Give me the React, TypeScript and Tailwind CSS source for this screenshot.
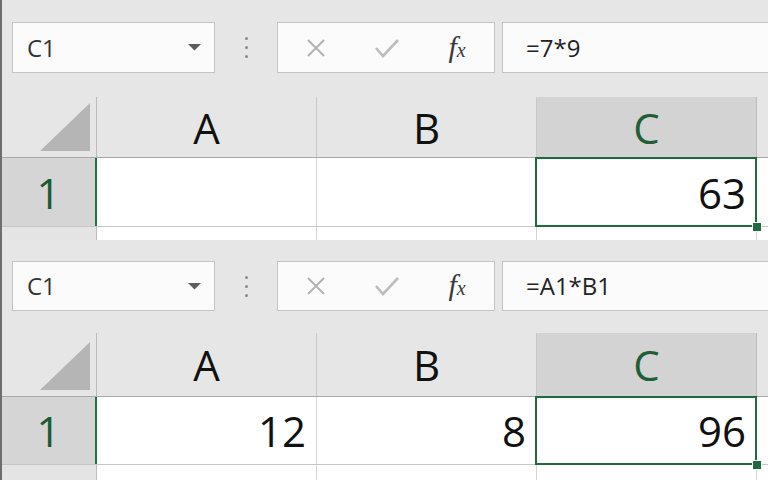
import React from "react";

const GREEN = "#217346";

interface PanelProps {
  formula: string;
  values: string[];
  top: string;
  boxH: string;
  gap: string;
  headerH: string;
  rowH: string;
}

function XIcon() {
  return (
    <svg width="22" height="18" viewBox="0 0 22 18" fill="none">
      <path d="M3 1 L19 17 M19 1 L3 17" stroke="#b3b3b3" strokeWidth="2" />
    </svg>
  );
}

function CheckIcon() {
  return (
    <svg width="26" height="20" viewBox="0 0 26 20" fill="none">
      <path d="M2 10 L9 18 L24 2" stroke="#bdbdbd" strokeWidth="2.6" />
    </svg>
  );
}

function FormulaBar({ formula, boxH }: { formula: string; boxH: string }) {
  return (
    <div className={`flex items-stretch ${boxH}`}>
      <div className="ml-[10px] flex w-[203px] items-center justify-between border border-[#c4c4c4] bg-[#fbfbfb] pl-[14px] pr-[13px]">
        <span className="text-[24px] text-[#333]">C1</span>
        <svg width="13" height="7" viewBox="0 0 13 7">
          <path d="M0 0 H13 L6.5 6.5 Z" fill="#5c5c5c" />
        </svg>
      </div>
      <div className="flex w-[62px] flex-col items-center justify-center gap-[6px]">
        <span className="h-[3px] w-[3px] rounded-full bg-[#8a8a8a]" />
        <span className="h-[3px] w-[3px] rounded-full bg-[#8a8a8a]" />
        <span className="h-[3px] w-[3px] rounded-full bg-[#8a8a8a]" />
      </div>
      <div className="flex w-[218px] items-center border border-[#c4c4c4] bg-[#fbfbfb]">
        <div className="flex w-[74px] justify-center pl-[2px]">
          <XIcon />
        </div>
        <div className="flex w-[70px] justify-center">
          <CheckIcon />
        </div>
        <div className="flex w-[70px] justify-center pb-[2px]">
          <span className="font-['Liberation_Serif',serif] text-[30px] italic leading-none text-[#3a3a3a]">
            f<span className="text-[20px]">x</span>
          </span>
        </div>
      </div>
      <div className="ml-[7px] flex flex-1 items-center border border-r-0 border-[#c4c4c4] bg-[#fbfbfb] pl-[23px]">
        <span className="text-[24px] text-[#222]">{formula}</span>
      </div>
    </div>
  );
}

function Panel({ formula, values, top, boxH, gap, headerH, rowH }: PanelProps) {
  const cols = ["A", "B", "C"];
  return (
    <div className="flex h-[240px] flex-col">
      <div className={top} />
      <FormulaBar formula={formula} boxH={boxH} />
      <div className={gap} />
      {/* column headers */}
      <div className={`flex ${headerH} border-b border-[#a8a8a8]`}>
        <div className="flex w-[95px] items-end justify-end border-r border-[#bdbdbd] pb-[6px] pr-[6px]">
          <svg width="50" height="48" viewBox="0 0 50 48">
            <path d="M0 48 L50 48 L50 0 Z" fill="#b5b5b5" />
          </svg>
        </div>
        {cols.map((c) => (
          <div
            key={c}
            className={
              c === "C"
                ? "flex w-[220px] items-center justify-center border-r border-[#bdbdbd] bg-[#d3d3d3] text-[42px] text-[#1f5f37]"
                : "flex w-[220px] items-center justify-center border-r border-[#c8c8c8] text-[42px] text-[#111]"
            }
          >
            {c}
          </div>
        ))}
        <div className="flex-1" />
      </div>
      {/* row 1 */}
      <div className={`flex ${rowH} border-b border-[#c6c6c6]`}>
        <div
          className="flex w-[95px] items-center justify-center border-r-2 bg-[#d5d5d5] text-[42px] text-[#1c5a33]"
          style={{ borderColor: GREEN }}
        >
          1
        </div>
        {values.map((v, i) => (
          <div
            key={i}
            className="relative flex w-[220px] items-center justify-end border-r border-[#d4d4d4] bg-white pr-[10px] text-[42px] text-[#111]"
          >
            {v}
            {i === 2 && (
              <>
                <div className="absolute -bottom-[1px] -left-[2px] -right-[1px] -top-[1px] border-2 border-[#1f6b3f]" />
                <div className="absolute -bottom-[6px] -right-[6px] h-[10px] w-[10px] border border-white bg-[#1f6b3f]" />
              </>
            )}
          </div>
        ))}
        <div className="flex-1 bg-white" />
      </div>
      {/* row 2 (partial) */}
      <div className="flex flex-1">
        <div className="w-[95px] border-r border-[#bdbdbd] bg-[#e4e4e4]" />
        <div className="w-[220px] border-r border-[#d4d4d4] bg-white" />
        <div className="w-[220px] border-r border-[#d4d4d4] bg-white" />
        <div className="w-[220px] border-r border-[#d4d4d4] bg-white" />
        <div className="flex-1 bg-white" />
      </div>
    </div>
  );
}

export default function App() {
  return (
    <div className="flex h-[480px] w-[768px] flex-col overflow-hidden border-l-2 border-[#6e6e6e] bg-[#e6e6e6] font-['Open_Sans',sans-serif]">
      <Panel
        formula="=7*9"
        values={["", "", "63"]}
        top="h-[22px]"
        boxH="h-[51px]"
        gap="h-[24px]"
        headerH="h-[61px]"
        rowH="h-[69px]"
      />
      <Panel
        formula="=A1*B1"
        values={["12", "8", "96"]}
        top="h-[21px]"
        boxH="h-[50px]"
        gap="h-[22px]"
        headerH="h-[64px]"
        rowH="h-[68px]"
      />
    </div>
  );
}
